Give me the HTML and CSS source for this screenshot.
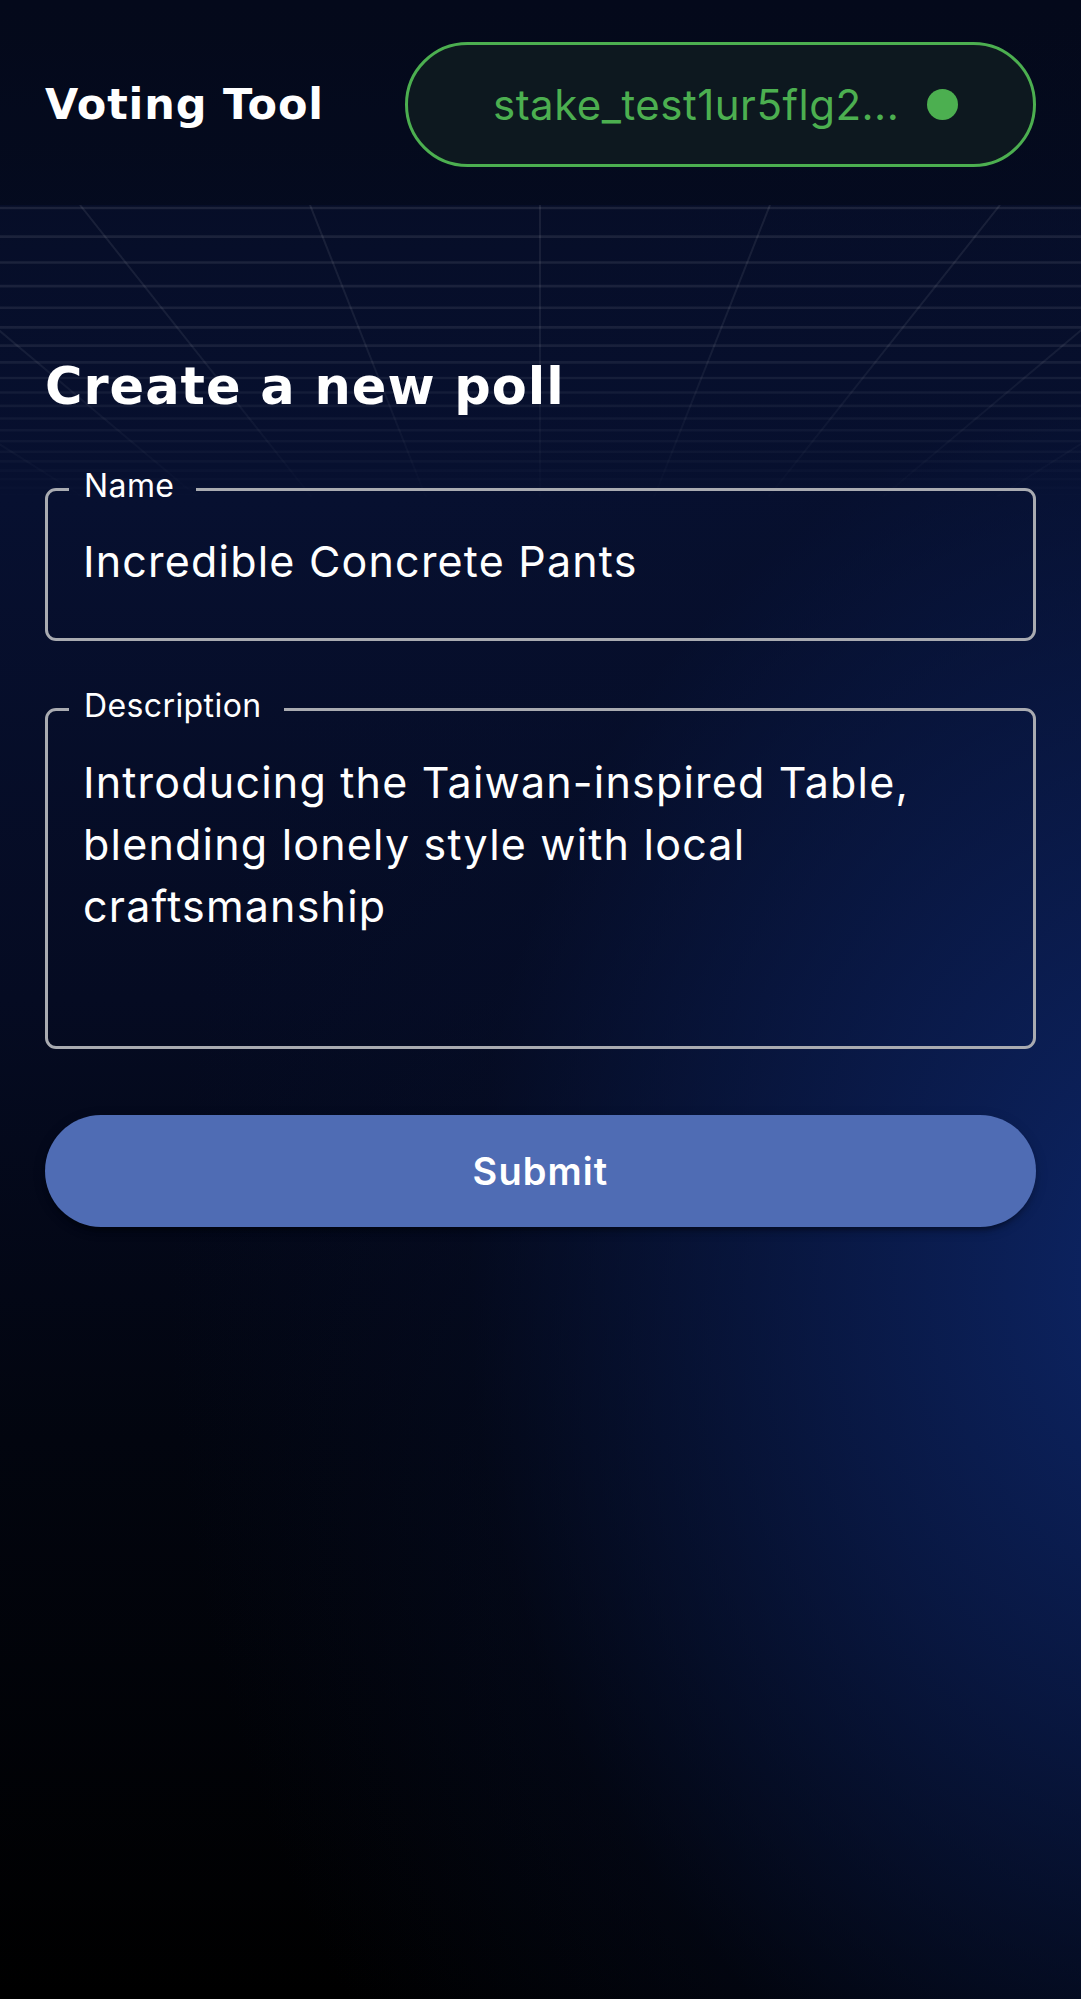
FILE: index.html
```html
<!DOCTYPE html>
<html lang="en">
<head>
<meta charset="utf-8">
<title>Voting Tool</title>
<link rel="stylesheet" href="styles.css">
</head>
<body>
<div class="page">
  <header class="topbar">
    <h1 class="brand">Voting Tool</h1>
    <button class="wallet" type="button">
      <span class="wallet-addr">stake_test1ur5flg2...</span>
      <span class="wallet-dot"></span>
    </button>
  </header>
  <main class="content">
    <svg class="grid-bg" viewBox="0 0 1081 300" preserveAspectRatio="none" aria-hidden="true">
      <g class="grid-h">
        <line x1="0" x2="1081" y1="3" y2="3"/>
        <line x1="0" x2="1081" y1="31.6" y2="31.6"/>
        <line x1="0" x2="1081" y1="57.5" y2="57.5"/>
        <line x1="0" x2="1081" y1="81.1" y2="81.1"/>
        <line x1="0" x2="1081" y1="102.7" y2="102.7"/>
        <line x1="0" x2="1081" y1="122.4" y2="122.4"/>
        <line x1="0" x2="1081" y1="140.6" y2="140.6"/>
        <line x1="0" x2="1081" y1="157.4" y2="157.4"/>
        <line x1="0" x2="1081" y1="173" y2="173"/>
        <line x1="0" x2="1081" y1="187.5" y2="187.5"/>
        <line x1="0" x2="1081" y1="200.9" y2="200.9"/>
        <line x1="0" x2="1081" y1="213.5" y2="213.5"/>
        <line x1="0" x2="1081" y1="225.3" y2="225.3"/>
        <line x1="0" x2="1081" y1="236.3" y2="236.3"/>
        <line x1="0" x2="1081" y1="246.7" y2="246.7"/>
        <line x1="0" x2="1081" y1="256.4" y2="256.4"/>
        <line x1="0" x2="1081" y1="265.6" y2="265.6"/>
        <line x1="0" x2="1081" y1="274.3" y2="274.3"/>
        <line x1="0" x2="1081" y1="282.6" y2="282.6"/>
        <line x1="0" x2="1081" y1="290.4" y2="290.4"/>
        <line x1="0" x2="1081" y1="297.8" y2="297.8"/>
      </g>
      <g class="grid-v">
        <line x1="-380" y1="0" x2="95.9" y2="300"/>
        <line x1="-150" y1="0" x2="206.9" y2="300"/>
        <line x1="80" y1="0" x2="317.9" y2="300"/>
        <line x1="310" y1="0" x2="429" y2="300"/>
        <line x1="540" y1="0" x2="540" y2="300"/>
        <line x1="770" y1="0" x2="651" y2="300"/>
        <line x1="1000" y1="0" x2="762.1" y2="300"/>
        <line x1="1230" y1="0" x2="873.1" y2="300"/>
        <line x1="1460" y1="0" x2="984.1" y2="300"/>
      </g>
    </svg>

    <h2 class="title">Create a new poll</h2>

    <form class="poll-form">
      <fieldset class="field">
        <legend class="field-label">Name</legend>
        <div class="field-value">Incredible Concrete Pants</div>
      </fieldset>
      <fieldset class="field field-multiline">
        <legend class="field-label">Description</legend>
        <div class="field-value">Introducing the Taiwan-inspired Table, blending lonely style with local craftsmanship</div>
      </fieldset>
      <button class="submit" type="button">Submit</button>
    </form>
  </main>
</div>
</body>
</html>
```

FILE: styles.css
```css
html, body {
  margin: 0;
  padding: 0;
}

body {
  min-height: 1999px;
  color: #ffffff;
  font-family: "Inter", "Noto Sans", sans-serif;
  background-color: #010309;
  background-image:
    radial-gradient(ellipse 1200px 1500px at 110% 64%, rgba(13, 38, 104, 1) 0%, rgba(11, 30, 84, 0.75) 30%, rgba(6, 15, 44, 0.35) 60%, rgba(0, 0, 0, 0) 85%),
    linear-gradient(180deg, #060c22 0%, #071030 25%, #050b22 50%, #02050f 72%, #000000 100%);
}

.page {
  min-height: 1999px;
}

/* ---------- Top bar ---------- */
.topbar {
  display: flex;
  align-items: center;
  justify-content: space-between;
  height: 205px;
  box-sizing: border-box;
  padding: 42px 45px 38px;
  background: rgba(2, 5, 14, 0.35);
}

.brand {
  margin: 0;
  font-family: "DejaVu Sans", sans-serif;
  font-weight: 700;
  font-size: 43px;
  line-height: 1;
  letter-spacing: 0.85px;
  color: #ffffff;
}

.wallet {
  display: flex;
  align-items: center;
  width: 631px;
  height: 125px;
  box-sizing: border-box;
  padding: 0 75px 0 85px;
  border: 3px solid #4caf50;
  border-radius: 63px;
  background: #0d181f;
  color: #4caf50;
  font-family: "Inter", sans-serif;
  font-weight: 400;
  font-size: 42px;
  line-height: 1;
  letter-spacing: 0.5px;
  cursor: pointer;
}

.wallet-dot {
  flex: none;
  width: 31px;
  height: 31px;
  margin-left: auto;
  border-radius: 50%;
  background: #4caf50;
}

/* ---------- Content ---------- */
.content {
  position: relative;
  padding: 151px 45px 0;
}

.grid-bg {
  position: absolute;
  left: 0;
  top: 0;
  width: 1081px;
  height: 300px;
  pointer-events: none;
  -webkit-mask-image: linear-gradient(180deg, #000 0%, rgba(0,0,0,0.85) 45%, rgba(0,0,0,0.3) 85%, transparent 100%);
  mask-image: linear-gradient(180deg, #000 0%, rgba(0,0,0,0.85) 45%, rgba(0,0,0,0.3) 85%, transparent 100%);
}

.grid-h line {
  stroke: rgba(255, 255, 255, 0.09);
  stroke-width: 2.6;
}

.grid-v line {
  stroke: rgba(255, 255, 255, 0.08);
  stroke-width: 2;
}

.title {
  position: relative;
  margin: 0;
  font-family: "DejaVu Sans", sans-serif;
  font-weight: 700;
  font-size: 51px;
  line-height: 61px;
  letter-spacing: 1px;
  color: #ffffff;
}

.poll-form {
  position: relative;
  display: flex;
  flex-direction: column;
  margin-top: 53px;
}

.field {
  margin: 0;
  padding: 0;
  min-width: 0;
  border: 3px solid #a9abb1;
  border-radius: 11px;
}

.field + .field {
  margin-top: 49px;
}

.field-label {
  margin-left: 21px;
  padding: 0 22px 6px 15px;
  font-family: "Inter", sans-serif;
  font-size: 32px;
  line-height: 32px;
  letter-spacing: 0.4px;
  color: #ffffff;
}

.field-value {
  padding: 22px 38px 46px 35px;
  font-family: "Inter", sans-serif;
  font-size: 43px;
  line-height: 62px;
  letter-spacing: 1.2px;
  color: #ffffff;
}

.field-multiline .field-value {
  padding: 23px 38px 47px 35px;
  min-height: 248px;
}

.submit {
  margin-top: 66px;
  height: 112px;
  border: 0;
  border-radius: 56px;
  background: #4f6cb4;
  color: #ffffff;
  font-family: "Inter", sans-serif;
  font-weight: 600;
  font-size: 38px;
  letter-spacing: 1.08px;
  cursor: pointer;
  box-shadow: 0 8px 3px -5px rgba(0, 0, 0, 0.2), 0 5px 5px 0 rgba(0, 0, 0, 0.14), 0 3px 14px 0 rgba(0, 0, 0, 0.12);
}
```
